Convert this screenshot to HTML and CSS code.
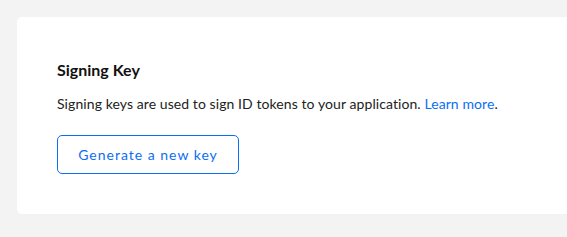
FILE: index.html
```html
<!DOCTYPE html>
<html lang="en">
<head>
<meta charset="UTF-8">
<meta name="viewport" content="width=device-width, initial-scale=1.0">
<title>Signing Key</title>
<link rel="stylesheet" href="styles.css">
</head>
<body>
<div class="page">
    <div class="card">
        <div class="card-title">Signing Key</div>
        <p class="card-text">Signing keys are used to sign ID tokens to your application. <a href="#" class="link">Learn more</a>.</p>
        <button class="button">Generate a new key</button>
    </div>
</div>
</body>
</html>
```

FILE: styles.css
```css
body {
    font-family: Lato, "Noto Sans", sans-serif;
    background-color: #f3f3f3;
    margin: 0;
    padding: 0;
}

.page {
    padding: 17px 0 23px 17px;
}

.card {
    background-color: #ffffff;
    border-radius: 5px 0 0 5px;
    padding: 43px 40px 40px 40px;
}

.card-title {
    font-size: 16px;
    font-weight: bold;
    color: #111111;
    line-height: 19px;
}

.card-text {
    font-size: 14px;
    letter-spacing: 0.08px;
    color: #222222;
    line-height: 18px;
    margin: 16px 0 22px 0;
}

.link {
    color: #0b6ef5;
    text-decoration: none;
}

.button {
    font-family: inherit;
    font-size: 14px;
    letter-spacing: 1px;
    color: #0b6ef5;
    background-color: #ffffff;
    border: 1px solid #0b6ef5;
    border-radius: 5px;
    width: 182px;
    height: 39px;
    padding: 0;
    cursor: pointer;
}
```
